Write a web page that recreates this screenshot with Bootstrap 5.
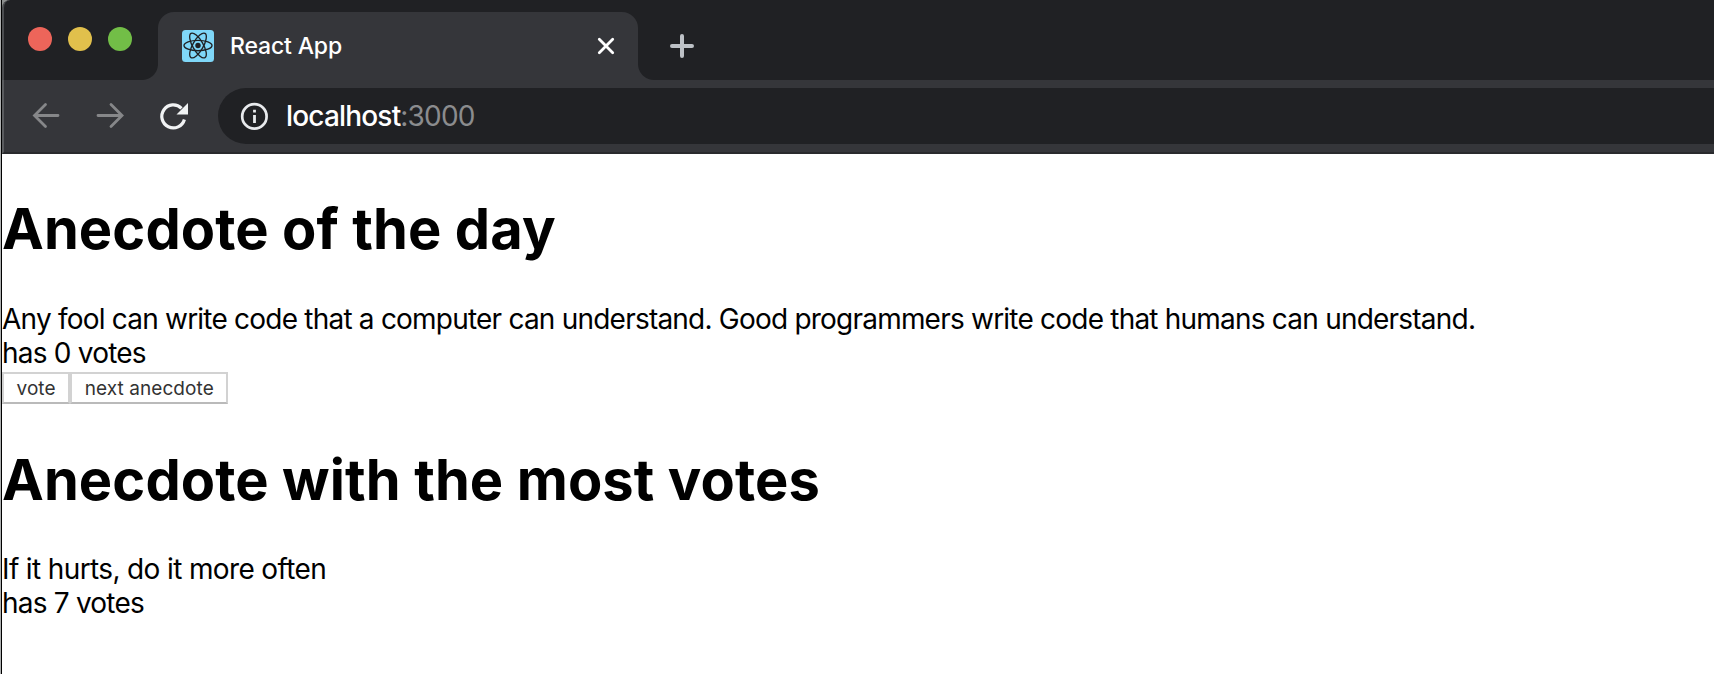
<!DOCTYPE html>
<html lang="en">
<head>
<meta charset="utf-8">
<meta name="viewport" content="width=device-width, initial-scale=1">
<title>React App</title>
<link href="https://cdn.jsdelivr.net/npm/bootstrap@5.3.0/dist/css/bootstrap.min.css" rel="stylesheet">
<style>
  body { font-family: Inter, sans-serif; font-size: 28px; line-height: 34px; color: #000; height: 674px; overflow: hidden; }
  .browser-window { height: 674px; padding-left: 2px; background: linear-gradient(90deg, #aeb0b0 1px, #000 1px, #000 2px, #fff 2px); }
  .chrome-top { background: #8c8f8e; }
  .tab-strip { height: 80px; background: #202124; border-left: 2px solid #4b4d50; padding-left: 24px; border-top-left-radius: 8px; }
  .light { width: 24px; height: 24px; margin-top: 27px; }
  .light-close { background: #ed655a; }
  .light-min { background: #e1c04c; }
  .light-max { background: #72be47; }
  .browser-tab { width: 480px; height: 68px; margin: 12px 0 0 26px; padding: 0 22px 0 24px; background: #35363a; border-radius: 16px 16px 0 0; }
  .browser-tab::before, .browser-tab::after { content: ""; position: absolute; bottom: 0; width: 16px; height: 16px; }
  .browser-tab::before { left: -16px; background: radial-gradient(circle at 0 0, transparent 15.5px, #35363a 16.5px); }
  .browser-tab::after { right: -16px; background: radial-gradient(circle at 100% 0, transparent 15.5px, #35363a 16.5px); }
  .tab-title { font-size: 23px; font-weight: 450; letter-spacing: -.15px; color: #fff; margin-left: 16px; }
  .tab-new { margin: 33px 0 0 31px; }
  .toolbar { height: 74px; background: #35363a; border-left: 2px solid #5a5c5f; border-bottom: 2px solid #292a2d; padding: 8px 0 8px 26px; gap: 32px; }
  .address { height: 56px; background: #202124; border-radius: 28px 0 0 28px; margin-left: -4px; padding-left: 22px; color: #fff; }
  .address .host { margin-left: 18px; letter-spacing: -.82px; }
  .host-name { font-weight: 450; }
  .port { color: #8b8c8e; }
  .page-title { font-size: 56px; font-weight: 700; line-height: 68px; letter-spacing: .1px; color: #000; margin: 41px 0 39px; }
  .best-title { margin: 42px 0 38px; }
  .day-text { letter-spacing: -.785px; }
  .best-text { letter-spacing: -.63px; }
  .plain-btn { height: 32px; font-size: 19px; line-height: 26px; letter-spacing: .08px; padding: 2px 12.5px 0; color: #333; background: #fff; border: 2px solid #d2d2d2; border-bottom-color: #bababa; border-radius: 0; }
  .actions { margin-top: 2px; }
</style>
</head>
<body>
<div class="browser-window">
  <header class="chrome-top">
    <div class="tab-strip d-flex align-items-start">
      <div class="d-flex gap-3">
        <span class="light light-close rounded-circle"></span>
        <span class="light light-min rounded-circle"></span>
        <span class="light light-max rounded-circle"></span>
      </div>
      <div class="browser-tab position-relative d-flex align-items-center">
        <svg width="32" height="32" viewBox="0 0 32 32">
          <rect width="32" height="32" rx="3.5" fill="#7fd7f8"/>
          <g fill="none" stroke="#202124" stroke-width="1.35">
            <ellipse cx="16" cy="15.5" rx="14" ry="5.2"/>
            <ellipse cx="16" cy="15.5" rx="14" ry="5.2" transform="rotate(60 16 15.5)"/>
            <ellipse cx="16" cy="15.5" rx="14" ry="5.2" transform="rotate(120 16 15.5)"/>
          </g>
          <circle cx="16" cy="15.5" r="2.7" fill="#202124"/>
        </svg>
        <span class="tab-title">React App</span>
        <svg class="ms-auto" width="20" height="20" viewBox="0 0 20 20" fill="none" stroke="#fff" stroke-width="2.8" stroke-linecap="round"><path d="M3.3 3.3l13.4 13.4M16.7 3.3L3.3 16.7"/></svg>
      </div>
      <svg class="tab-new" width="26" height="26" viewBox="0 0 26 26" fill="none" stroke="#bdc1c6" stroke-width="4" stroke-linecap="round"><path d="M13 3v20M3 13h20"/></svg>
    </div>
    <div class="toolbar d-flex align-items-center">
      <svg width="32" height="32" viewBox="0 0 32 32" fill="none" stroke="#868789" stroke-width="2.8" stroke-linecap="round"><path d="M28 15.5H5M15.5 4.5L4.5 15.5l11 11"/></svg>
      <svg width="32" height="32" viewBox="0 0 32 32" fill="none" stroke="#868789" stroke-width="2.8" stroke-linecap="round"><path d="M4 15.5h23M17 4.5l11 11-11 11"/></svg>
      <svg width="32" height="32" viewBox="0 0 32 32"><path d="M26.4 19.5A11.5 11.5 0 1 1 23.5 8.3" fill="none" stroke="#f1f3f4" stroke-width="3.2"/><path d="M30 3v11.5H18.5z" fill="#f1f3f4"/></svg>
      <div class="address flex-grow-1 d-flex align-items-center">
        <svg width="28" height="28" viewBox="0 0 28 28"><circle cx="14.4" cy="14.4" r="12.2" fill="none" stroke="#e8eaed" stroke-width="2.7"/><path d="M13.1 13.1h2.8v8h-2.8zM13.1 7.7h2.8v2.9h-2.8z" fill="#e8eaed"/></svg>
        <span class="host"><span class="host-name">localhost</span><span class="port">:3000</span></span>
      </div>
    </div>
  </header>
  <main>
    <h1 class="page-title">Anecdote of the day</h1>
    <div class="day-text">Any fool can write code that a computer can understand. Good programmers write code that humans can understand.</div>
    <div class="day-text">has 0 votes</div>
    <div class="actions d-flex">
      <button class="plain-btn" type="button">vote</button><button class="plain-btn" type="button">next anecdote</button>
    </div>
    <h1 class="page-title best-title">Anecdote with the most votes</h1>
    <div class="best-text">If it hurts, do it more often</div>
    <div class="day-text">has 7 votes</div>
  </main>
</div>
<script src="https://cdn.jsdelivr.net/npm/bootstrap@5.3.0/dist/js/bootstrap.bundle.min.js"></script>
</body>
</html>
